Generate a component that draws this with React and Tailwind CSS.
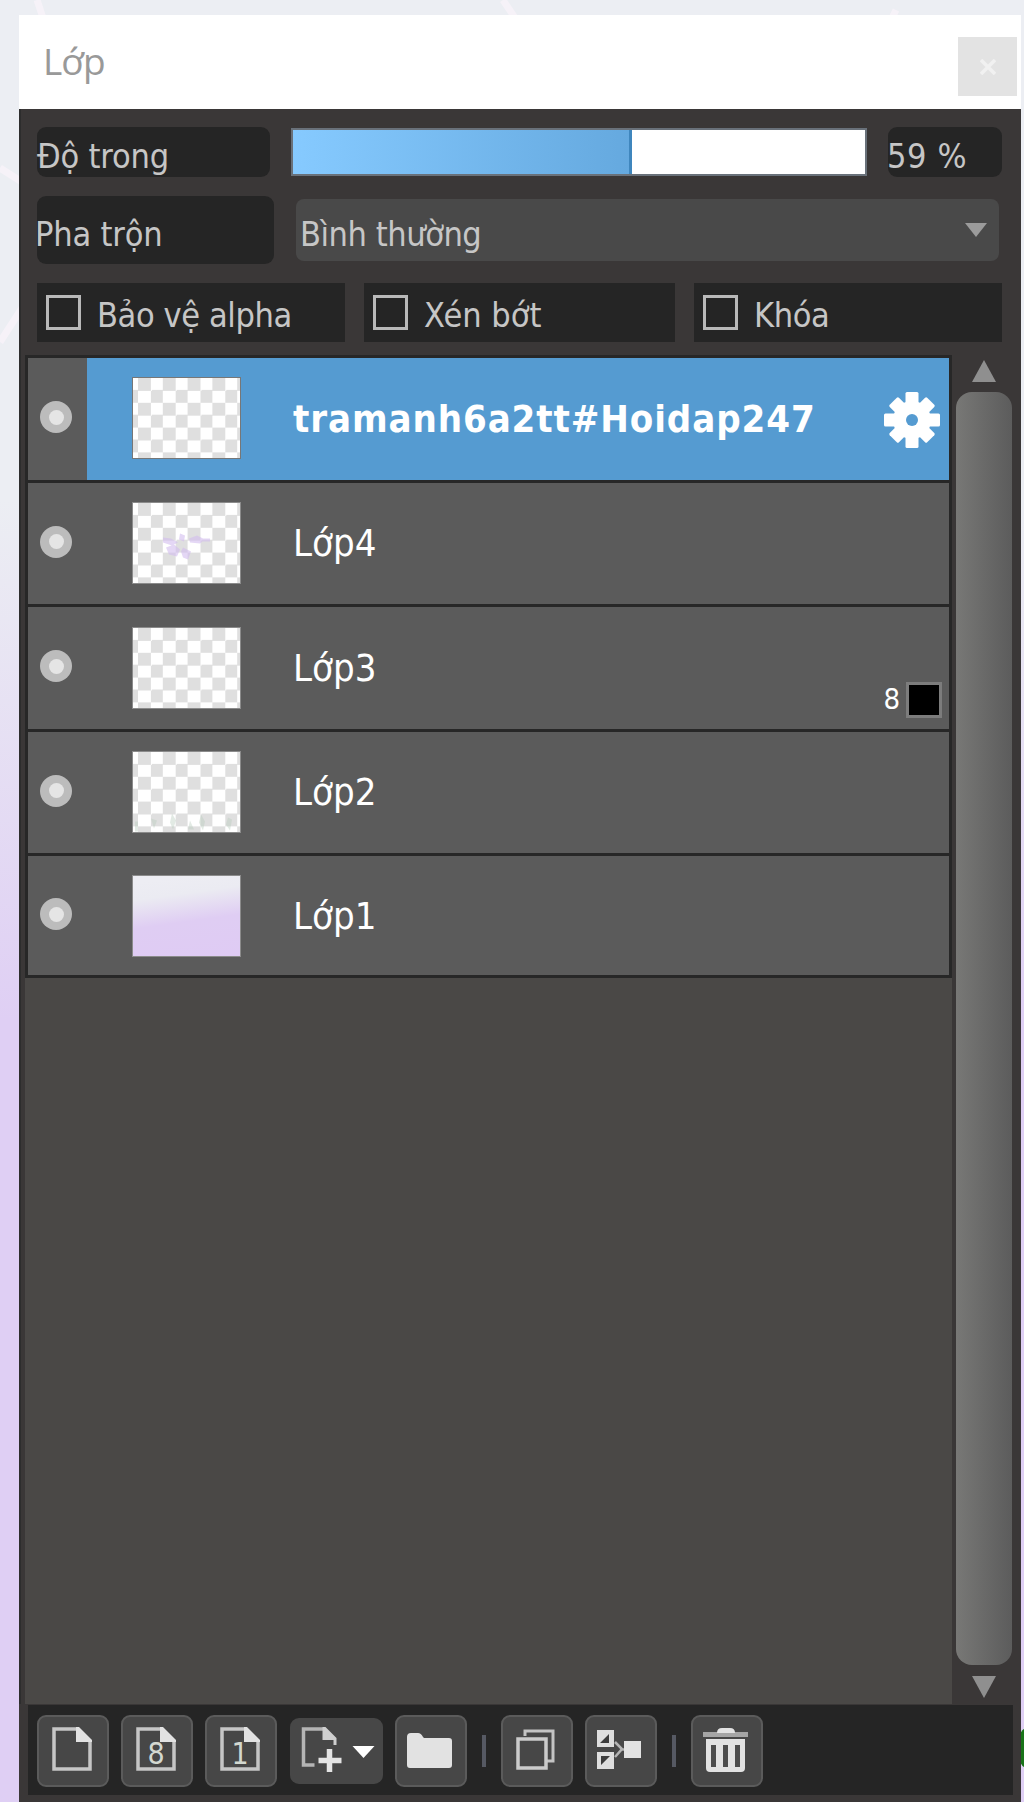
import { useState } from 'react'

const checker =
  'bg-[conic-gradient(#fff_25%,#dfdfdf_0_50%,#fff_0_75%,#dfdfdf_0)] bg-[length:24.8px_24.8px] bg-[position:5px_0px]'

const initialLayers = [
  { name: 'tramanh6a2tt#Hoidap247', thumb: checker },
  { name: 'Lớp4', thumb: checker, art: 'flowers' },
  { name: 'Lớp3', thumb: checker, bits: 8 },
  { name: 'Lớp2', thumb: checker, art: 'grass' },
  { name: 'Lớp1', thumb: 'bg-[linear-gradient(172deg,#ededf3_8%,#ebebf2_26%,#dfcdf3_56%,#dfcbf4)]' },
]

function Gear() {
  return (
    <svg viewBox="-28 -28 56 56" className="w-14 h-14">
      <g fill="#fff">
        {[0, 45, 90, 135].map((deg) => (
          <rect
            key={deg}
            x="-6.5"
            y={deg % 90 ? -26.5 : -28}
            width="13"
            height={deg % 90 ? 53 : 56}
            rx="1.5"
            transform={`rotate(${deg})`}
          />
        ))}
        <circle r="19" />
      </g>
      <circle r="6" fill="#559bd1" />
    </svg>
  )
}

function ThumbArt({ kind }) {
  if (kind === 'flowers') {
    return (
      <svg viewBox="0 0 107 79" className="w-full h-full" fill="#d3bdef" opacity="0.6">
        <path d="M30 34l8 1 7 4-6 3-9-3zM47 30l5 2-1 6-5-2zM56 35l8-3 8 4-5 4-10-1zM69 35h8v3h-8zM33 44l8-3 6 5-3 7-8-2zM50 44l8 4-3 8-5-2-2-6z" />
      </svg>
    )
  }
  if (kind === 'grass') {
    return (
      <svg viewBox="0 0 107 79" className="w-full h-full" fill="#b9cdbd" opacity="0.4">
        <path d="M2 69h3v10H2zM18 66l6 2-3 8zM39 61l4 7-3 9-3-7zM57 68l4 9h-6zM68 62l4 7-2 9-4-8zM95 65l4 2-2 11-4-6z" />
      </svg>
    )
  }
  return null
}

function LayerRow({ layer, selected, onSelect }) {
  return (
    <div
      onClick={onSelect}
      className="flex h-[124.5px] border-b-[3px] border-[#272727] bg-[#5b5b5b] last:h-[122px]"
    >
      <div className="flex w-[59px] items-center justify-center pr-[3px] pb-[3px]">
        <div className="flex h-8 w-8 items-center justify-center rounded-full bg-[#bcbcbc]">
          <div className="h-[15px] w-[15px] rounded-full bg-[#e5e5e5]" />
        </div>
      </div>
      <div className={`flex flex-1 items-center pl-[45px] ${selected ? 'bg-[#559bd1]' : ''}`}>
        <div
          className={`h-[82px] w-[109px] shrink-0 border ${
            selected ? 'mb-[2px] border-[#777]' : 'border-[#8b8b8b]'
          } ${layer.thumb}`}
        >
          <ThumbArt kind={layer.art} />
        </div>
        <div
          className={`flex-1 whitespace-nowrap pl-[52px] text-[38px] leading-[40px] text-white ${
            selected ? 'font-bold tracking-[0.9px]' : 'tracking-[0px]'
          }`}
        >
          {layer.name}
        </div>
        {selected && (
          <div className="mt-[3px] mr-[9px]">
            <Gear />
          </div>
        )}
        {layer.bits && (
          <div className="mr-[7px] mb-[11px] flex items-center gap-[6px] self-end">
            <span className="pb-[2px] text-[29px] leading-8 text-white">{layer.bits}</span>
            <div className="h-9 w-9 border-[3px] border-[#7c7c7c] bg-black" />
          </div>
        )}
      </div>
    </div>
  )
}

function CheckOption({ label, className }) {
  const [checked, setChecked] = useState(false)
  return (
    <button
      onClick={() => setChecked(!checked)}
      className={`flex h-[59px] items-center bg-[#252525] pl-[9px] ${className}`}
    >
      <span className={`h-[35px] w-[35px] border-[3px] border-[#b9b9b9] ${checked ? 'bg-[#b9b9b9]' : ''}`} />
      <span className="pt-1 pl-4">{label}</span>
    </button>
  )
}

function ToolButton({ children }) {
  return (
    <button className="h-[72px] w-[72px] rounded-[9px] border-2 border-[#5b5b5b] bg-[#474747]">
      <svg viewBox="2 2 68 68" className="h-full w-full">
        {children}
      </svg>
    </button>
  )
}

function Page({ label }) {
  return (
    <>
      <path d="M41 14H17v40h36V25" fill="none" stroke="#c6c6c6" strokeWidth="3.5" />
      <path d="M39 12h3l13 13v2H39z" fill="#e2e2e2" />
      {label && (
        <text x="35" y="48.5" textAnchor="middle" fontSize="30" fill="#d3d8d0">
          {label}
        </text>
      )}
    </>
  )
}

function Toolbar() {
  return (
    <div className="mt-px ml-[9px] mr-2 flex h-[90px] items-center gap-3 bg-[#252525] pt-[2px] pl-[9px]">
      <ToolButton>
        <Page />
      </ToolButton>
      <ToolButton>
        <Page label="8" />
      </ToolButton>
      <ToolButton>
        <Page label="1" />
      </ToolButton>
      <button className="ml-px h-[66px] w-[93px] rounded-[9px] bg-[#474747]">
        <svg viewBox="0 0 92 66" className="h-full w-full">
          <path d="M33 11H13v36h11" fill="none" stroke="#b5b5b5" strokeWidth="3.5" />
          <path d="M32 9h3l11 11v7h-3v-5H32z" fill="#cfcfcf" />
          <path d="M39 31v23M28 42.500h23" fill="none" stroke="#e4e4e4" strokeWidth="5.500" />
          <path d="M62 28h22L73 40z" fill="#fff" />
        </svg>
      </button>
      <ToolButton>
        <path
          d="M12 22q0-4 4-4h7q3 0 5 4l1 1h25q3 0 3 3v24q0 3-3 3H15q-3 0-3-3z"
          fill="#e2e2e2"
        />
      </ToolButton>
      <div className="mx-[3px] h-8 w-1 bg-[#565963]" />
      <ToolButton>
        <path d="M24 21v-5h28v30h-6" fill="none" stroke="#c4c4c4" strokeWidth="3" />
        <path d="M17 24h28v29H17z" fill="none" stroke="#cbcbcb" strokeWidth="3.500" />
      </ToolButton>
      <ToolButton>
        <path d="M12 15h17v17H12zM12 37h17v17H12z" fill="#dedede" />
        <path d="M24 19v9h-9zM16 41h9l-9 9z" fill="#3c3c3c" />
        <path d="M30 27l7 7-7 8M36 34.500h5" fill="none" stroke="#b5b5b5" strokeWidth="2.500" />
        <path d="M39 26h17v17H39z" fill="#e2e2e2" />
      </ToolButton>
      <div className="mx-[3px] h-8 w-1 bg-[#565963]" />
      <ToolButton>
        <path d="M12 17h45v5H12z" fill="#a5a5a5" />
        <path d="M26 18q0-5 5-5h8q5 0 5 5z" fill="#e2e2e2" />
        <path d="M15 24h39v29q0 4-4 4H19q-4 0-4-4z" fill="#e2e2e2" />
        <path d="M22.500 30v22M34.500 30v22M46.500 30v22" fill="none" stroke="#4c4c4c" strokeWidth="5" />
      </ToolButton>
    </div>
  )
}

function App() {
  const [layers] = useState(initialLayers)
  const [selected, setSelected] = useState(0)
  const [opacity] = useState(59)

  return (
    <div className="relative h-[1802px] w-[1024px] overflow-hidden bg-[linear-gradient(#eceef3_0,#eceef3_500px,#dfcff4_1020px,#dfcff4)] pt-[15px] pl-[19px] font-['DejaVu_Sans_Condensed','DejaVu_Sans',sans-serif] [font-stretch:condensed]">
      {/* canvas strokes behind the window */}
      <svg className="absolute top-0 left-0 h-[400px] w-[1024px]" viewBox="0 0 1024 400" fill="none" stroke="#f6f2f8" strokeWidth="7">
        <path d="M37 0l6 18M503 0l12 18M892 18l4-8M0 168l22 14M0 342l22-34" />
      </svg>
      <div className="absolute top-[1728px] left-[1020px] h-10 w-2 rounded-l-full bg-[#197419]" />

      <div className="relative flex h-[1787px] w-[1002px] flex-col bg-[#3a3737]">
        {/* title bar */}
        <div className="flex h-[94px] shrink-0 items-start justify-between bg-white pr-[4px] pl-[24px]">
          <div className="pt-[22px] font-['Open_Sans',sans-serif] text-[37px] leading-[48px] tracking-[-1px] text-[#999] [font-stretch:normal]">
            Lớp
          </div>
          <button className="mt-[22px] flex h-[59px] w-[59px] items-center justify-center bg-[#e3e3e3]">
            <svg viewBox="0 0 16 16" className="h-4 w-4">
              <path d="M1 1l14 14M15 1L1 15" stroke="#f1f1f1" strokeWidth="3.5" />
            </svg>
          </button>
        </div>

        <div className="flex h-[246px] shrink-0 flex-col border-l-2 border-[#2d2d2d] pt-[18px] pl-4 text-[34px] leading-[40px] tracking-[-0.2px] whitespace-nowrap text-[#c6c6c6]">
          <div className="flex h-[50px] items-center">
            <div className="h-[50px] w-[233px] rounded-[9px] bg-[#252525] pt-[9px]">Độ trong</div>
            <div className="ml-[21px] h-[48px] w-[576px] border-2 border-[#69717a] bg-white">
              <div
                className="h-full border-r-[3px] border-[#3f86bd] bg-linear-to-r from-[#86caff] to-[#65a9df]"
                style={{ width: `${opacity + 0.3}%` }}
              />
            </div>
            <div className="ml-[21px] h-[50px] w-[114px] rounded-[9px] bg-[#252525] pt-[9px] indent-[-1px] tracking-[0.6px]">
              {opacity} %
            </div>
          </div>
          <div className="mt-[19px] flex h-[68px] items-center">
            <div className="h-[68px] w-[237px] rounded-[9px] bg-[#252525] pt-[18px] indent-[-2px]">Pha trộn</div>
            <div className="ml-[22px] flex h-[62px] w-[703px] items-center justify-between rounded-[8px] bg-[#494949] pr-3 pl-1">
              <span className="pt-[7px] tracking-[-0.45px]">Bình thường</span>
              <svg viewBox="0 0 22 14" className="h-[14px] w-[22px]">
                <path d="M0 0h22L11 14z" fill="#9b9b9b" />
              </svg>
            </div>
          </div>
          <div className="mt-[19px] flex tracking-[-0.4px]">
            <CheckOption label="Bảo vệ alpha" className="w-[308px]" />
            <CheckOption label="Xén bớt" className="ml-[19px] w-[311px] tracking-[0px]" />
            <CheckOption label="Khóa" className="ml-[19px] w-[308px]" />
          </div>
        </div>

        <div className="flex h-[1349px] shrink-0 border-l-2 border-[#2d2d2d]">
          <div className="ml-1 w-[927px] bg-[#4a4846]">
            <div className="border-x-[3px] border-t-[3px] border-[#272727]">
              {layers.map((layer, i) => (
                <LayerRow
                  key={layer.name}
                  layer={layer}
                  selected={i === selected}
                  onSelect={() => setSelected(i)}
                />
              ))}
            </div>
          </div>
          <div className="ml-1 flex w-[56px] flex-col items-center pt-[5px]">
            <svg viewBox="0 0 24 22" className="h-[22px] w-6">
              <path d="M12 0l12 22H0z" fill="#8f8f8f" />
            </svg>
            <div className="mt-[10px] h-[1273px] w-full rounded-[16px] bg-linear-to-r from-[#787876] to-[#5c5c5c]" />
            <svg viewBox="0 0 24 22" className="mt-[11px] h-[22px] w-6">
              <path d="M0 0h24L12 22z" fill="#8f8f8f" />
            </svg>
          </div>
        </div>
        <Toolbar />
      </div>
    </div>
  )
}

export default App
